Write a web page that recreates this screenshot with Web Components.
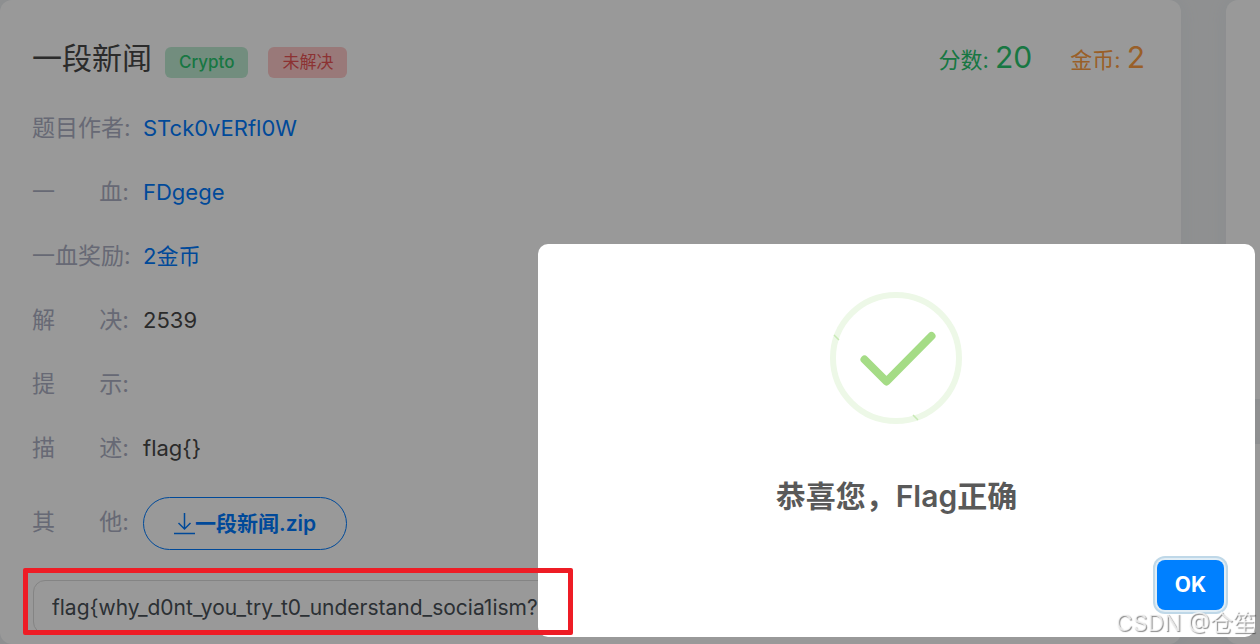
<!DOCTYPE html>
<html lang="zh-CN">
<head>
<meta charset="utf-8">
<title>一段新闻</title>
<style>
html,body{margin:0;height:100%}
body{font-family:Inter,"Noto Sans CJK SC",sans-serif;background:#eff1f2;color:#494949;overflow:hidden}
a{color:#007bff;text-decoration:none}
</style>
</head>
<body>
<challenge-page>
  <challenge-card>
    <challenge-header name="一段新闻" category="Crypto" state="未解决" score="20" coins="2"></challenge-header>
    <info-row first="题目作者"><a href="#author">STck0vERfl0W</a></info-row>
    <info-row first="一" last="血"><a href="#blood">FDgege</a></info-row>
    <info-row first="一血奖励"><a href="#reward">2金币</a></info-row>
    <info-row first="解" last="决">2539</info-row>
    <info-row first="提" last="示"></info-row>
    <info-row first="描" last="述">flag{}</info-row>
    <info-row first="其" last="他"><download-button>一段新闻.zip</download-button></info-row>
    <flag-field value="flag{why_d0nt_you_try_t0_understand_socia1ism?"></flag-field>
  </challenge-card>
  <side-column></side-column>
</challenge-page>
<modal-overlay><success-dialog>恭喜您，Flag正确</success-dialog></modal-overlay>
<highlight-box></highlight-box>
<water-mark>CSDN @仓笙</water-mark>
<script>
const define = (name, render) => customElements.define(name, class extends HTMLElement {
  connectedCallback() {
    if (this.shadowRoot) return;
    this.attachShadow({ mode: "open" }).innerHTML = render(this);
  }
});
const at = (el, n) => el.getAttribute(n) || "";

define("challenge-page", () => `<style>
:host{display:grid;grid-template-columns:minmax(0,1fr) 34px;gap:45px;min-height:100%}
</style><slot></slot>`);

define("challenge-card", () => `<style>
:host{display:block;box-sizing:border-box;background:#fff;border-radius:12px;padding:26px 36px 0 32px;box-shadow:0 0 24px #e6e9f0;font-size:22px}
</style><slot></slot>`);

define("side-column", () => `<style>
:host{display:grid;grid-template-rows:4fr 2fr;gap:45px}
div{background:#fff;border-radius:12px 0 0 12px;box-shadow:0 0 24px #e6e9f0}
</style><div></div><div></div>`);

define("challenge-header", el => `<style>
:host{display:flex;align-items:center;height:64px;line-height:32px;padding-bottom:6px}
h1{margin:0;font-size:30px;font-weight:400;line-height:52px}
.tag{margin:8px 0 0 13px;padding:0 14px;border-radius:6px;font-size:17px;line-height:31px}
.cat{background:#bfecd3;color:#28c76f;font-weight:500}
.state{background:#ffcaca;color:#ea5455;margin-left:20px}
.stats{margin-left:auto;display:flex;gap:38px}
.score{color:#28c76f}.coins{color:#ff9f43}
b{font-size:30px;font-weight:400}
</style><h1>${at(el,"name")}</h1><span class="tag cat">${at(el,"category")}</span><span class="tag state">${at(el,"state")}</span>
<div class="stats"><span class="score">分数: <b>${at(el,"score")}</b></span><span class="coins">金币: <b>${at(el,"coins")}</b></span></div>`);

define("info-row", el => `<style>
:host{display:flex;align-items:center;min-height:64px;line-height:32px}
.label{display:flex;justify-content:space-between;width:97px;margin-right:14px;color:#acafc3;font-size:23px;white-space:nowrap}
</style><span class="label"><span>${at(el,"first")}${at(el,"last") ? "" : ":"}</span>${at(el,"last") ? `<span>${at(el,"last")}:</span>` : ""}</span><slot></slot>`);

define("download-button", () => `<style>
:host{display:block;padding:17px 0 14px}
button{display:flex;align-items:center;height:53px;padding:0 30px;border:1px solid #007bff;border-radius:27px;background:none;color:#007bff;font:600 21px/32px Inter,"Noto Sans CJK SC",sans-serif}
svg{display:block}
</style><button type="button"><svg width="21" height="24" viewBox="0 0 21 24" fill="none" stroke="currentColor" stroke-width="1.5"><path d="M10.500 1v16M4.500 11l6 6 6-6M0 21.500h21"/></svg><slot></slot></button>`);

define("flag-field", el => `<style>
:host{display:block;padding:16px 0 0 1px}
input{display:block;box-sizing:border-box;width:100%;height:54px;padding:0 18px;border:1px solid #dcdcdc;border-radius:12px;background:#fff;color:#495057;font:400 21px/32px Inter,"Noto Sans CJK SC",sans-serif}
</style><input type="text" aria-label="Flag" value="${at(el,"value")}">`);

define("modal-overlay", () => `<style>
:host{position:fixed;inset:0;display:flex;justify-content:flex-end;align-items:flex-end;padding:0 5px 7px 0;background:rgba(0,0,0,.4)}
</style><slot></slot>`);

define("success-dialog", () => `<style>
:host{display:block;box-sizing:border-box;width:57.14%;background:#fff;border-radius:10px;padding:48px 31px 27px;text-align:center}
svg{display:block;margin:0 auto 48px}
h2{margin:0 0 40px;color:#595959;font-size:30px;font-weight:600;line-height:48px}
.foot{display:flex;justify-content:flex-end}
button{width:67px;height:50px;padding:0;border:0;border-radius:8px;background:#0080ff;color:#fff;font:700 21px/32px Inter,sans-serif;box-shadow:0 0 0 2px #e1edf5,0 0 0 4px #bfd8e8}
</style><svg width="132" height="132" viewBox="0 0 132 132" fill="none"><circle cx="66" cy="66" r="63" stroke="#edf8e7" stroke-width="6"/><path d="M4 43l5 5M83 123l5 5" stroke="#c8eab5" stroke-width="1.500"/><path d="M34.500 67.500L56.500 89.500L101.500 44" stroke="#a5dc86" stroke-width="8" stroke-linecap="round" stroke-linejoin="round"/></svg>
<h2><slot></slot></h2><div class="foot"><button type="button">OK</button></div>`);

define("highlight-box", () => `<style>
:host{position:absolute;left:23px;top:568px;width:550px;height:67px;box-sizing:border-box;border:5px solid #ee1c25;border-radius:2px;pointer-events:none}
</style>`);

define("water-mark", () => `<style>
:host{position:absolute;right:4px;bottom:4px;color:rgba(255,255,255,.75);font-size:23px;line-height:34px;text-shadow:1px 1px 1px rgba(0,0,0,.45);pointer-events:none;white-space:nowrap}
</style><slot></slot>`);
</script>
</body>
</html>
